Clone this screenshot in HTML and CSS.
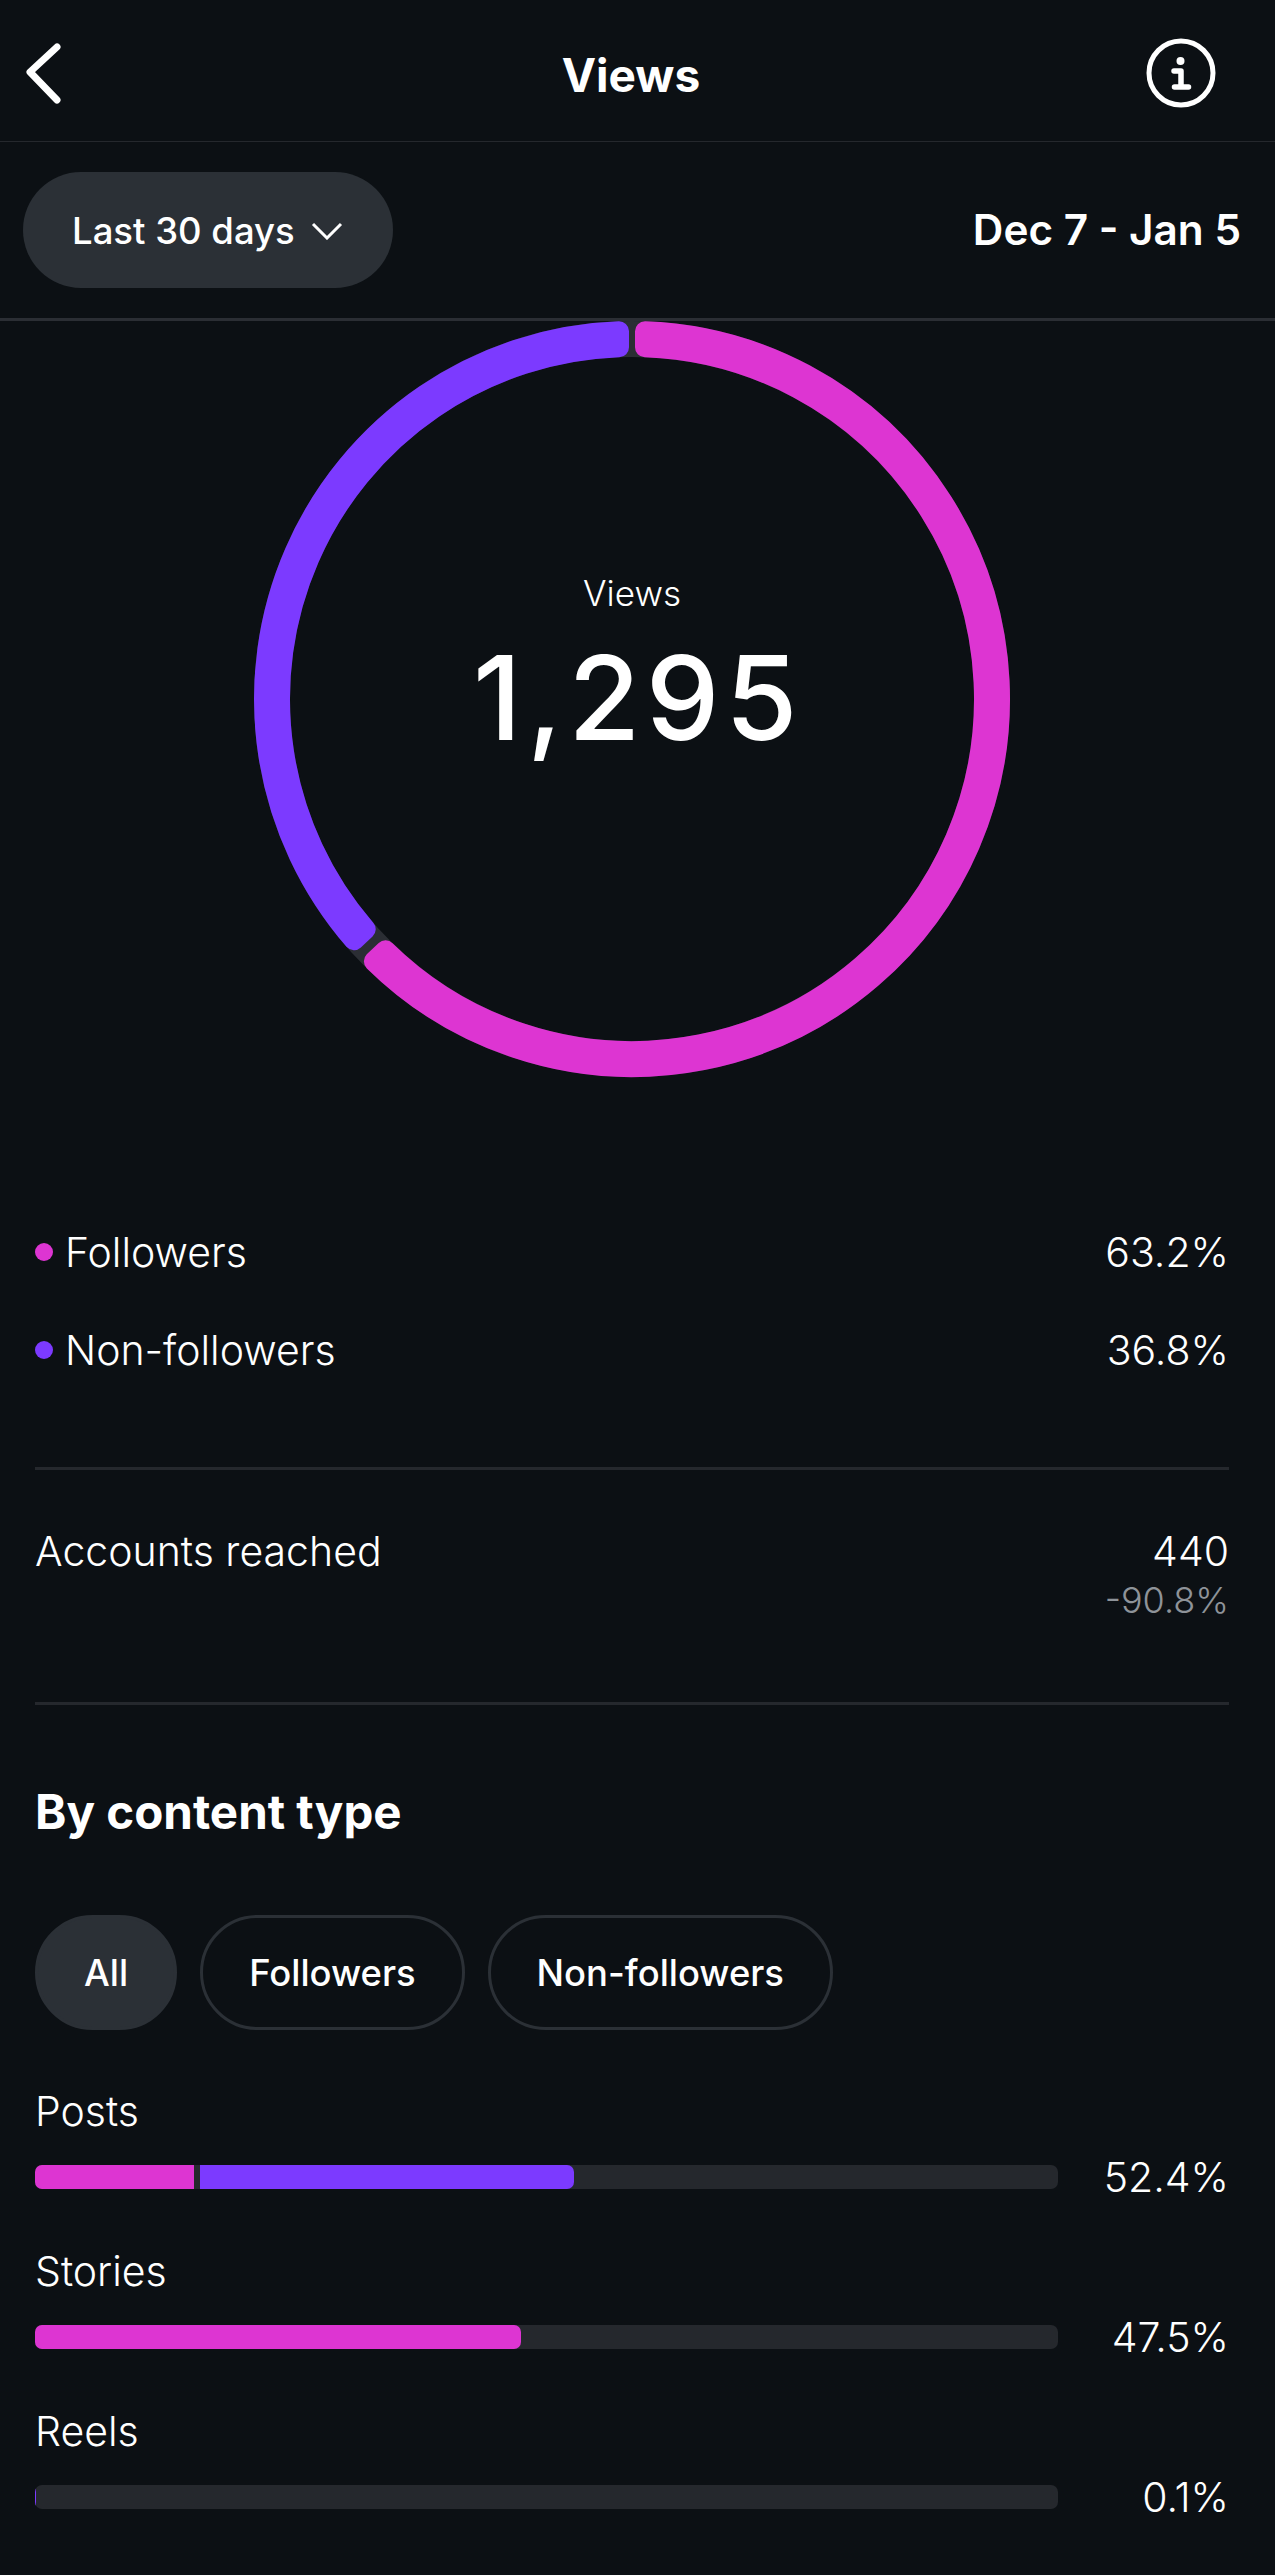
FILE: index.html
```html
<!DOCTYPE html>
<html lang="en">
<head>
    <meta charset="UTF-8">
    <meta name="viewport" content="width=device-width, initial-scale=1.0">
    <title>Views</title>
    <link rel="stylesheet" href="styles.css">
</head>
<body>

    <header class="topbar">
        <svg class="back-icon" width="40" height="62" viewBox="0 0 40 62">
            <polyline points="34,5 7,30 34,58" fill="none" stroke="#fff" stroke-width="7" stroke-linecap="round" stroke-linejoin="round"/>
        </svg>
        <h1 class="page-title">Views</h1>
        <svg class="info-icon" width="72" height="72" viewBox="0 0 72 72">
            <circle cx="36" cy="36" r="32" fill="none" stroke="#fff" stroke-width="5"/>
            <circle cx="35.5" cy="24" r="4" fill="#fff"/>
            <path d="M29 34h7v16M29.500 50h14" fill="none" stroke="#fff" stroke-width="5.500" stroke-linecap="round" stroke-linejoin="round"/>
        </svg>
    </header>

    <div class="range-bar">
        <div class="range-pill">
            <span>Last 30 days</span>
            <svg width="32" height="18" viewBox="0 0 32 18">
                <polyline points="2,2 16,16 30,2" fill="none" stroke="#fff" stroke-width="3"/>
            </svg>
        </div>
        <div class="range-dates">Dec 7 - Jan 5</div>
    </div>

    <section class="ring">
        <svg class="ring-chart" width="760" height="758" viewBox="0 2 760 758">
            <circle cx="380" cy="380" r="360" fill="none" stroke="#2b2e34" stroke-width="36"/>
            <path class="seg-followers" d="M393 12.23A368 368 0 1 1 121.87 642.28L133.55 631.32A352 352 0 1 0 393 28.24Z"/>
            <path class="seg-others" d="M102.03 621.15A368 368 0 0 1 367 12.23L367 28.24A352 352 0 0 0 113.7 610.19Z"/>
        </svg>
        <div class="ring-label">
            <div class="ring-title">Views</div>
            <div class="ring-total">1,295</div>
        </div>
    </section>

    <main class="content">
        <div class="legend">
            <div class="legend-row">
                <span class="legend-name"><i class="dot dot-followers"></i>Followers</span>
                <span>63.2%</span>
            </div>
            <div class="legend-row">
                <span class="legend-name"><i class="dot dot-others"></i>Non-followers</span>
                <span>36.8%</span>
            </div>
        </div>

        <div class="reach">
            <span>Accounts reached</span>
            <div class="reach-values">
                <div>440</div>
                <div class="reach-change">-90.8%</div>
            </div>
        </div>

        <h2 class="section-title">By content type</h2>

        <div class="chips">
            <div class="chip chip-active">All</div>
            <div class="chip">Followers</div>
            <div class="chip">Non-followers</div>
        </div>

        <div class="type-row">
            <div class="type-name">Posts</div>
            <div class="type-bar">
                <div class="track">
                    <div class="fill fill-followers" style="width: 159px"></div>
                    <div class="fill fill-others fill-split" style="width: 374px"></div>
                </div>
                <span class="type-pct">52.4%</span>
            </div>
        </div>
        <div class="type-row">
            <div class="type-name">Stories</div>
            <div class="type-bar">
                <div class="track">
                    <div class="fill fill-followers" style="width: 486px"></div>
                </div>
                <span class="type-pct">47.5%</span>
            </div>
        </div>
        <div class="type-row">
            <div class="type-name">Reels</div>
            <div class="type-bar">
                <div class="track">
                    <div class="fill fill-others" style="width: 1px"></div>
                </div>
                <span class="type-pct">0.1%</span>
            </div>
        </div>
    </main>

</body>
</html>
```

FILE: styles.css
```css
body {
    margin: 0;
    width: 1275px;
    height: 2575px;
    overflow: hidden;
    background: #0c1014;
    color: white;
    font-family: Inter, "Liberation Sans", sans-serif;
}
.topbar {
    display: grid;
    grid-template-columns: 1fr auto 1fr;
    align-items: center;
    height: 141px;
    border-bottom: 1px solid #25282d;
}
.back-icon {
    margin-left: 23px;
    margin-top: 4px;
}
.info-icon {
    justify-self: end;
    margin-right: 58px;
    margin-top: 5px;
}
.page-title {
    margin: 9px 13px 0 0;
    font-size: 46px;
    font-weight: 700;
}
.range-bar {
    display: flex;
    justify-content: space-between;
    align-items: center;
    height: 176px;
    padding: 0 34px 0 23px;
    border-bottom: 3px solid #2b2e34;
}
.range-pill {
    display: flex;
    align-items: center;
    gap: 16px;
    height: 116px;
    padding: 2px 50px 0 49px;
    box-sizing: border-box;
    background: #2b3036;
    border-radius: 58px;
    font-size: 36.5px;
    font-weight: 500;
}
.range-dates {
    margin-top: -1px;
    font-size: 42.3px;
    font-weight: 600;
}
.ring {
    display: grid;
    width: 760px;
    margin-left: 252px;
}
.ring-chart {
    grid-area: 1 / 1;
    display: block;
}
.seg-followers, .seg-others {
    stroke-width: 20;
    stroke-linejoin: round;
}
.seg-followers {
    fill: #dd35d2;
    stroke: #dd35d2;
}
.seg-others {
    fill: #7c3aff;
    stroke: #7c3aff;
}
.ring-label {
    grid-area: 1 / 1;
    align-self: start;
    margin-top: 252px;
    text-align: center;
}
.ring-title {
    font-size: 35px;
    line-height: 40px;
    font-weight: 300;
}
.ring-total {
    margin: 15px 0 0 12px;
    font-size: 117px;
    line-height: 140px;
    font-weight: 500;
    letter-spacing: 5.6px;
}
.content {
    padding: 124px 46px 0 35px;
    font-size: 41px;
    font-weight: 300;
}
.legend {
    padding-bottom: 68px;
    border-bottom: 3px solid #25282d;
}
.legend-row {
    display: flex;
    justify-content: space-between;
    align-items: center;
    height: 98px;
}
.legend-name {
    display: flex;
    align-items: center;
}
.dot {
    width: 18px;
    height: 18px;
    margin-right: 12px;
    border-radius: 50%;
}
.dot-followers {
    background: #dd35d2;
}
.dot-others {
    background: #7c3aff;
}
.reach {
    display: flex;
    justify-content: space-between;
    padding: 56px 0 78px 0;
    border-bottom: 3px solid #25282d;
    line-height: 50px;
}
.reach-values {
    text-align: right;
}
.reach-change {
    color: #8e9399;
    font-size: 36px;
    line-height: 48px;
}
.section-title {
    margin: 77px 0 73px;
    font-size: 47.5px;
    line-height: 60px;
    font-weight: 700;
}
.chips {
    display: flex;
    gap: 23px;
    margin-bottom: 56px;
}
.chip {
    display: flex;
    align-items: center;
    box-sizing: border-box;
    height: 115px;
    padding: 0 46px;
    border: 3px solid #2b3036;
    border-radius: 58px;
    font-size: 36.4px;
    font-weight: 500;
}
.chip-active {
    background: #2b3036;
}
.type-row {
    margin-bottom: 57px;
}
.type-name {
    margin-bottom: 29px;
    line-height: 50px;
}
.type-bar {
    display: flex;
    align-items: center;
    height: 24px;
}
.track {
    display: flex;
    flex: 1;
    overflow: hidden;
    height: 24px;
    background: #25282d;
    border-radius: 7px;
}
.fill {
    height: 100%;
    border-radius: 0 7px 7px 0;
}
.fill-followers {
    background: #dd35d2;
}
.fill-others {
    background: #7c3aff;
}
.fill-split {
    margin-left: 6px;
}
.fill-followers:not(:last-child) {
    border-radius: 0;
}
.type-pct {
    width: 171px;
    text-align: right;
}
```
